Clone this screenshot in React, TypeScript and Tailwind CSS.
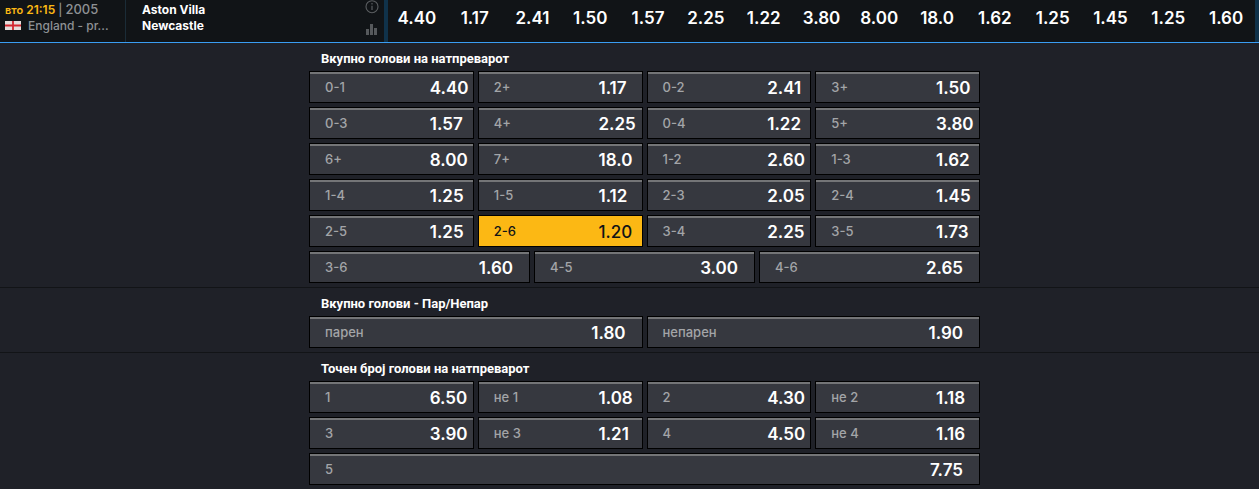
import { useState } from "react";
import { clsx } from "clsx";

type Pick = { label: string; odd: string };
type Market = { title: string; rows: Pick[][] };

const mainOdds = [
  "4.40", "1.17", "2.41", "1.50", "1.57", "2.25", "1.22", "3.80",
  "8.00", "18.0", "1.62", "1.25", "1.45", "1.25", "1.60"
];

const markets: Market[] = [
  {
    title: "Вкупно голови на натпреварот",
    rows: [
      [{ label: "0-1", odd: "4.40" }, { label: "2+", odd: "1.17" }, { label: "0-2", odd: "2.41" }, { label: "3+", odd: "1.50" }],
      [{ label: "0-3", odd: "1.57" }, { label: "4+", odd: "2.25" }, { label: "0-4", odd: "1.22" }, { label: "5+", odd: "3.80" }],
      [{ label: "6+", odd: "8.00" }, { label: "7+", odd: "18.0" }, { label: "1-2", odd: "2.60" }, { label: "1-3", odd: "1.62" }],
      [{ label: "1-4", odd: "1.25" }, { label: "1-5", odd: "1.12" }, { label: "2-3", odd: "2.05" }, { label: "2-4", odd: "1.45" }],
      [{ label: "2-5", odd: "1.25" }, { label: "2-6", odd: "1.20" }, { label: "3-4", odd: "2.25" }, { label: "3-5", odd: "1.73" }],
      [{ label: "3-6", odd: "1.60" }, { label: "4-5", odd: "3.00" }, { label: "4-6", odd: "2.65" }]
    ]
  },
  {
    title: "Вкупно голови - Пар/Непар",
    rows: [[{ label: "парен", odd: "1.80" }, { label: "непарен", odd: "1.90" }]]
  },
  {
    title: "Точен број голови на натпреварот",
    rows: [
      [{ label: "1", odd: "6.50" }, { label: "не 1", odd: "1.08" }, { label: "2", odd: "4.30" }, { label: "не 2", odd: "1.18" }],
      [{ label: "3", odd: "3.90" }, { label: "не 3", odd: "1.21" }, { label: "4", odd: "4.50" }, { label: "не 4", odd: "1.16" }],
      [{ label: "5", odd: "7.75" }]
    ]
  }
];

function EnglandFlag() {
  return (
    <svg viewBox="0 0 16 9" className="h-[9px] w-4 shrink-0" aria-hidden="true">
      <rect width="16" height="9" fill="#e4dcda" />
      <path d="M8 0v9M0 4.5h16" stroke="#d3262f" strokeWidth="1.8" />
    </svg>
  );
}

function InfoIcon() {
  return (
    <svg viewBox="0 0 14 14" className="size-3.5" fill="none" stroke="#5b5e61" aria-hidden="true">
      <circle cx="7" cy="6.7" r="6" strokeWidth="1.1" />
      <path d="M7 5.7v4.2M7 3.1v1.3" strokeWidth="1.2" />
    </svg>
  );
}

function StatsIcon() {
  return (
    <svg viewBox="0 0 12 12" className="size-3" fill="#56595c" aria-hidden="true">
      <path d="M0 5h3v6H0zM4 0h3v11H4zM8 4h3v7H8z" />
    </svg>
  );
}

function MatchHeader() {
  return (
    <header className="flex h-[43px] border-b border-[#3a9df2] bg-[#111417]">
      <div className="w-[126px] shrink-0 border-r border-[#1b2c37] pl-[5px] pt-[2px] text-xs font-medium leading-[15px] text-[#8e9194]">
        <div className="flex gap-[3px] whitespace-nowrap">
          <span className="font-semibold text-[#fcb814]">
            <span className="text-[11px]">вто</span> 21:15
          </span>
          <span>|</span>
          <span className="text-[13px]">2005</span>
        </div>
        <div className="flex items-center gap-[7px]">
          <EnglandFlag />
          <span className="truncate">England - pr...</span>
        </div>
      </div>
      <div className="flex w-[258px] shrink-0 justify-between pl-4 pr-[5px]">
        <div className="pt-[2px] text-xs font-bold leading-4 text-white">
          <div>Aston Villa</div>
          <div>Newcastle</div>
        </div>
        <div className="flex flex-col items-center gap-[10px]">
          <button aria-label="Info">
            <InfoIcon />
          </button>
          <button aria-label="Statistics">
            <StatsIcon />
          </button>
        </div>
      </div>
      <div className="flex flex-1 border-x-4 border-[#10324a]">
        {mainOdds.map((odd, i) => (
          <button key={i} className="min-w-0 flex-1 pb-1 text-[17px] font-semibold text-white">
            {odd}
          </button>
        ))}
      </div>
    </header>
  );
}

type PickButtonProps = { pick: Pick; narrow: boolean; selected: boolean; onClick: () => void };

function PickButton({ pick, narrow, selected, onClick }: PickButtonProps) {
  return (
    <button
      onClick={onClick}
      aria-pressed={selected}
      className={clsx("h-8 min-w-0 flex-1 border border-black", selected ? "bg-[#fcb814] text-[#111417]" : "bg-[#36383f] text-white")}
    >
      <span
        className={clsx(
          "flex h-full items-center justify-between border-t-2 pl-[15px]",
          selected ? "border-[#fcb814]" : "border-[#747577]"
        )}
      >
        <span className={clsx("pb-px text-[13px] font-medium", selected ? "text-[#111417]" : "text-[#a3a5a8]")}>{pick.label}</span>
        <span
          className={clsx(
            "pt-px text-[17px]",
            selected ? "font-medium" : "font-semibold",
            narrow ? "w-[43px] text-left" : "pr-4 text-right"
          )}
        >
          {pick.odd}
        </span>
      </span>
    </button>
  );
}

export default function App() {
  const [selected, setSelected] = useState("0-2-6");

  return (
    <div className="min-h-screen bg-[#1f2128] font-['Inter','Noto_Sans',sans-serif]">
      <MatchHeader />
      <main className="divide-y divide-[#121417]">
        {markets.map((market, m) => (
          <section key={market.title} className="pb-1 pl-[30px]">
            <div className="mx-auto w-full max-w-[671px]">
              <h2 className="h-7 pl-3 pt-[2px] font-['Roboto','Noto_Sans',sans-serif] text-[13px] font-bold leading-7 text-white">
                {market.title}
              </h2>
              <div className="flex flex-col gap-1">
                {market.rows.map((row, r) => (
                  <div key={r} className="flex gap-1">
                    {row.map((pick) => {
                      const id = `${m}-${pick.label}`;
                      return (
                        <PickButton
                          key={id}
                          pick={pick}
                          narrow={row.length === 4}
                          selected={selected === id}
                          onClick={() => setSelected(selected === id ? "" : id)}
                        />
                      );
                    })}
                  </div>
                ))}
              </div>
            </div>
          </section>
        ))}
      </main>
    </div>
  );
}
